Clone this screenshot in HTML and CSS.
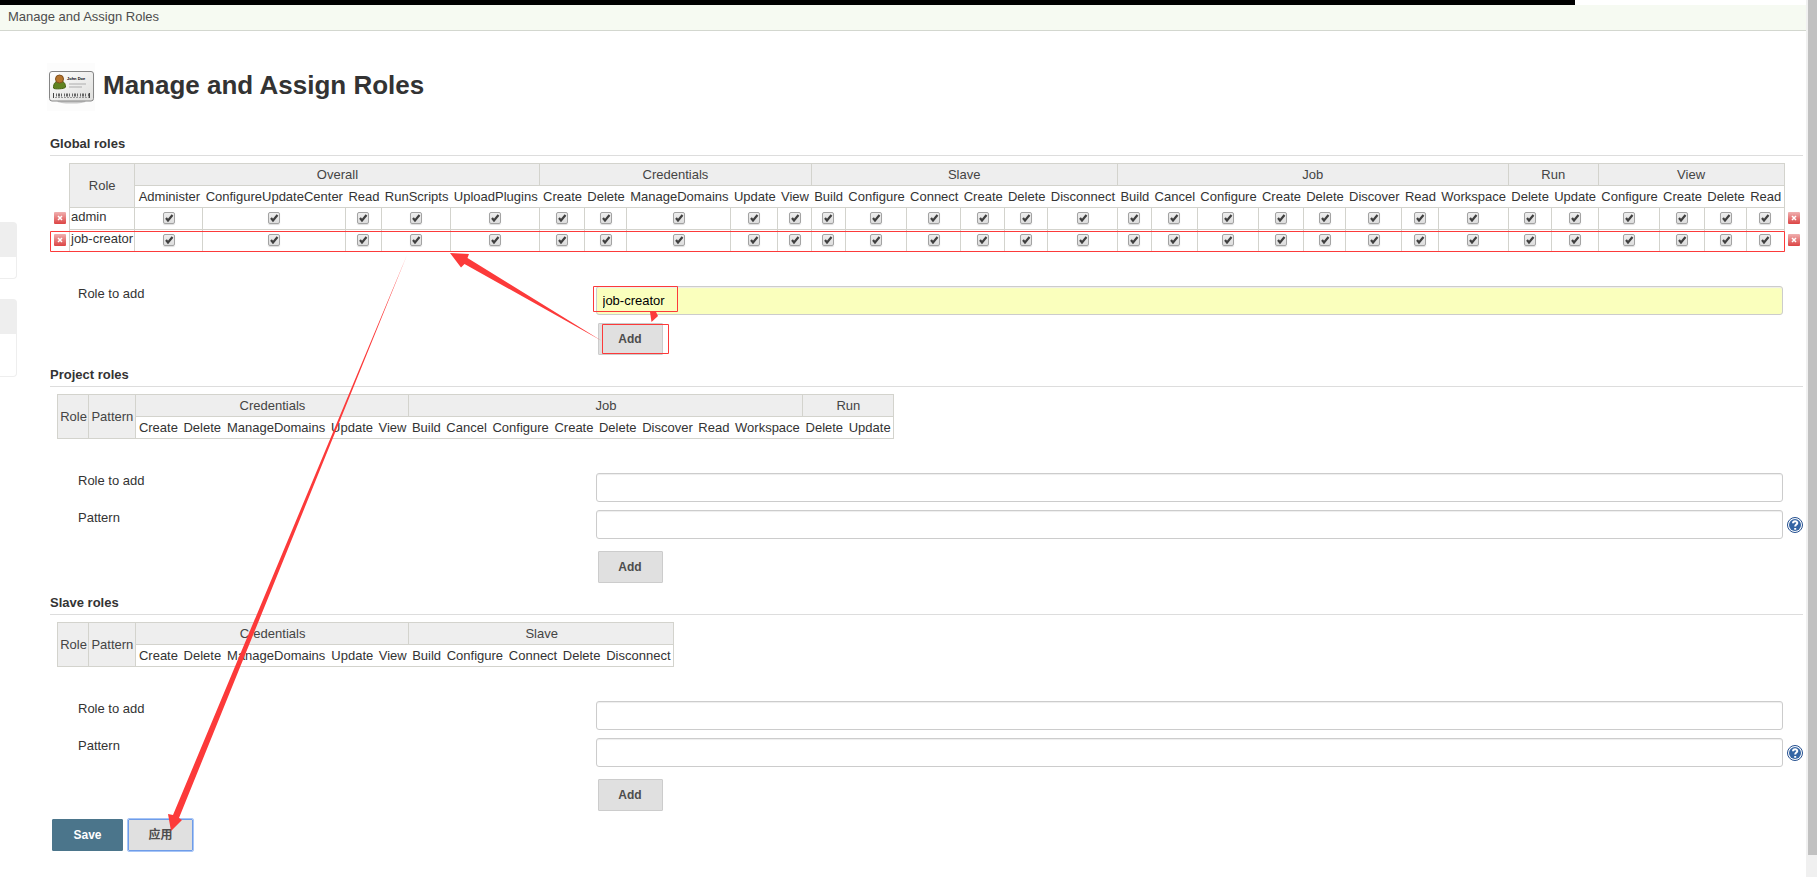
FILE: index.html
```html
<!DOCTYPE html>
<html lang="en">
<head>
<meta charset="utf-8">
<title>Manage and Assign Roles</title>
<link rel="stylesheet" href="styles.css">
</head>
<body>
<div class="viewport">
  <div class="topbar"><div class="topbar-fill"></div></div>
  <nav class="breadcrumb"><a href="#">Manage and Assign Roles</a></nav>
  <div class="columns">
    <aside class="side">
      <div class="pane"><div class="pane-head"></div><div class="pane-body"></div></div>
      <div class="pane pane-tall"><div class="pane-head"></div><div class="pane-body"></div></div>
    </aside>
    <main class="main">
      <header class="title">
        <svg class="badge" viewBox="0 0 48 48" aria-hidden="true">
          <defs><linearGradient id="card" x1="0" y1="0" x2="1" y2="1"><stop offset="0" stop-color="#fff"/><stop offset="1" stop-color="#dededc"/></linearGradient></defs>
          <rect width="48" height="48" fill="#fcfcfc"/>
          <ellipse cx="24.500" cy="38.500" rx="14" ry="2" fill="#c8c8c8"/>
          <rect x="2.500" y="8.500" width="44" height="29.500" rx="2.500" fill="url(#card)" stroke="#858585"/>
          <path d="M6.500 25c0-5 2-7 6-7s6 2 6 6c0 2-12 2.500-12 1z" fill="#5f8220" stroke="#44600f"/>
          <circle cx="12.500" cy="16" r="4" fill="#b5742c" stroke="#80501d"/>
          <text class="badge-name" x="20" y="17">John Doe</text>
          <path d="M22 21h17M22 24h13" stroke="#c2c2c2" stroke-width="1.500"/>
          <path d="M6.500 30v5M42.500 30v5" stroke="#444"/>
          <path d="M9 32h33" stroke="#666" stroke-width="3" stroke-dasharray="1 1 2 1 1 2"/>
          <path d="M8 34.500h34" stroke="#999" stroke-dasharray="2 1"/>
        </svg>
        <h1>Manage and Assign Roles</h1>
      </header>

      <section class="section">
        <h2>Global roles</h2>
        <div class="matrix-box"><table class="matrix matrix-wide" id="global"></table></div>
        <form class="entry">
          <label for="g-role">Role to add</label>
          <input class="filled" type="text" id="g-role" value="job-creator">
          <button type="button">Add</button>
        </form>
      </section>

      <section class="section">
        <h2>Project roles</h2>
        <div class="matrix-box matrix-inset"><table class="matrix matrix-project" id="project"></table></div>
        <form class="entry">
          <label for="p-role">Role to add</label>
          <input type="text" id="p-role">
          <label for="p-pattern">Pattern</label>
          <input type="text" id="p-pattern">
          <a class="help" href="#" aria-label="Help"><svg viewBox="0 0 16 16"><circle cx="8" cy="8" r="7.500" fill="#fff" stroke="#244f8f"/><circle cx="8" cy="8" r="6" fill="#3465a4"/><path d="M6 6.300C6 3.500 10.300 3.700 10.300 6 10.300 7.600 8.200 7.600 8.200 9.500M8.200 11v1.800" fill="none" stroke="#fff" stroke-width="2"/></svg></a>
          <button type="button" class="low">Add</button>
        </form>
      </section>

      <section class="section">
        <h2>Slave roles</h2>
        <div class="matrix-box matrix-inset"><table class="matrix matrix-slave" id="slave"></table></div>
        <form class="entry">
          <label for="s-role">Role to add</label>
          <input type="text" id="s-role">
          <label for="s-pattern">Pattern</label>
          <input type="text" id="s-pattern">
          <a class="help" href="#" aria-label="Help"><svg viewBox="0 0 16 16"><circle cx="8" cy="8" r="7.500" fill="#fff" stroke="#244f8f"/><circle cx="8" cy="8" r="6" fill="#3465a4"/><path d="M6 6.300C6 3.500 10.300 3.700 10.300 6 10.300 7.600 8.200 7.600 8.200 9.500M8.200 11v1.800" fill="none" stroke="#fff" stroke-width="2"/></svg></a>
          <button type="button" class="low">Add</button>
        </form>
      </section>

      <div class="actions">
        <button type="button" class="save">Save</button>
        <button type="button" class="apply" lang="zh">应用</button>
      </div>
    </main>
  </div>
</div>
<div class="scrollbar"><div class="thumb"></div></div>
<svg class="notes" viewBox="0 0 1817 877" aria-hidden="true">
  <g fill="none" stroke="#fc3a3a">
    <path d="M50.500 231.500H1784.500V251.500H50.500z"/>
    <path d="M593.500 286.500H677.500V311.500H593.500z"/>
    <path d="M602.500 324.500H668.500V353.500H602.500z"/>
  </g>
  <g fill="#fc3a3a">
    <path d="M650 312h6l2 4-6.500 6z"/>
    <path d="M450 253l19 1-1.500 4L602 341 464.500 264l-3.500 3.500z"/>
    <path d="M171 831l-3-17 5 1L407 255 179 818l3 2z"/>
  </g>
</svg>
<script src="matrix.js"></script>
</body>
</html>
```

FILE: styles.css
```css
* { box-sizing: border-box; }
body {
  margin: 0;
  display: flex;
  min-height: 100vh;
  position: relative;
  background: #fff;
  color: #333;
  font: 13px/16px "Liberation Sans", Arial, "Noto Sans CJK SC", sans-serif;
}
a { color: inherit; text-decoration: none; }
.viewport { flex: 1; min-width: 0; }
.topbar { height: 5px; }
.topbar-fill { height: 5px; width: 87.2%; background: #000; }
.breadcrumb {
  height: 26px;
  padding: 4px 8px;
  background: #f6faf2;
  border-bottom: 1px solid #d3d7cf;
  color: #4d4d4d;
}
.columns { display: flex; }
.side { width: 17px; padding-top: 191px; }
.pane {
  border: 1px solid #eee;
  border-left: 0;
  border-radius: 0 4px 4px 0;
  margin-bottom: 20px;
}
.pane-head { height: 34px; background: #eee; }
.pane-body { height: 21px; }
.pane-tall .pane-body { height: 42px; }
.main { flex: 1; min-width: 0; padding: 32px 3px 0 33px; }

.title { display: flex; height: 72px; margin-left: -3px; }
.badge { width: 48px; height: 48px; }
.badge-name { font-size: 4px; font-weight: bold; }
h1 { margin: 6px 0 0 8px; font-size: 26px; line-height: 32px; white-space: nowrap; }

.section { margin-bottom: 11px; }
h2 {
  margin: 0 0 7px;
  height: 21px;
  font-size: 13px;
  line-height: 18px;
  border-bottom: 1px solid #ddd;
}
.matrix { border-collapse: collapse; white-space: nowrap; }
.matrix-box { margin-bottom: 34px; }
.matrix-wide { width: 100%; }
.matrix-project { min-width: 837px; }
.matrix-slave { min-width: 617px; }
.matrix-inset { padding-left: 7px; }
.matrix th, .matrix td {
  height: 22px;
  padding: 0 3px;
  font-weight: normal;
  text-align: center;
  border: 1px solid #d3d3cd;
}
.matrix .group { background: #eee; color: #444; }
.matrix-inset .group { padding: 0 1px 0 2px; }
.matrix .perm { border-left: 0; border-right: 0; padding: 0 2px 0 3px; }
.matrix .perm:last-of-type { border-right: 1px solid #d3d3cd; }
.matrix .edge, .matrix .edge:last-of-type { border: 0; width: 19px; padding: 0 3px; }
.matrix .edge:first-child { padding-left: 4px; }
.matrix .name { text-align: left; vertical-align: top; padding: 1px 1px 0; }
.matrix input {
  display: block;
  appearance: none;
  width: 12px;
  height: 12px;
  margin: 0 auto 2px;
  border: 1px solid #a3a3a3;
  border-radius: 2px;
  background: url("data:image/svg+xml,%3Csvg xmlns='http://www.w3.org/2000/svg' viewBox='0 0 10 10'%3E%3Cpath d='M2 5l2 2.500L8.500 2' fill='none' stroke='%23404040' stroke-width='2.200'/%3E%3C/svg%3E") center / 10px 10px no-repeat, linear-gradient(#eee, #ddd);
  box-shadow: 0 1px 1px #ddd;
}
.remove { display: block; width: 12px; height: 12px; margin: 0 0 2px; padding: 0; border: 0; background: none; }
.remove svg { display: block; }

.entry {
  display: grid;
  grid-template-columns: 30% minmax(0, 1fr) 20px;
  padding-left: 28px;
  row-gap: 8px;
}
.entry label { grid-column: 1; }
.entry input {
  grid-column: 2;
  height: 29px;
  padding: 0 6px 1px;
  border: 1px solid #ccc;
  border-radius: 3px;
  box-shadow: inset 0 1px 1px #eee;
  font: 13px/16px "Liberation Sans", Arial, sans-serif;
  color: #000;
}
.entry .filled { background: #faffbd; }
.help { grid-column: 3; padding: 7px 0 0 4px; }
.help svg { display: block; width: 16px; height: 16px; }
.entry button, .actions button {
  grid-column: 2;
  justify-self: start;
  width: 65px;
  height: 32px;
  margin: 0 2px;
  padding: 0;
  border: 1px solid #ccc;
  border-radius: 1px;
  background: #e0e0e0;
  color: #4d4d4d;
  font: bold 12px/16px "Liberation Sans", Arial, "Noto Sans CJK SC", sans-serif;
}
.entry .low { margin-top: 4px; }
.actions { display: flex; gap: 1px; margin-top: -3px; }
.actions .save { width: 71px; background: #4b758b; border-color: #4b758b; color: #fff; }
.actions .apply { border-color: #6f9ce8; outline: 1px solid #a6c5f7; }

.scrollbar { width: 11px; padding-left: 2px; background: #f0f0f0; }
.thumb { height: 97.5%; background: #c1c1c1; }
.notes { position: absolute; left: 0; top: 0; width: 1817px; height: 877px; pointer-events: none; }
```

FILE: matrix.js
```js
const CREDENTIALS = ["Credentials", ["Create", "Delete", "ManageDomains", "Update", "View"]];
const JOB = ["Job", ["Build", "Cancel", "Configure", "Create", "Delete", "Discover", "Read", "Workspace"]];
const RUN = ["Run", ["Delete", "Update"]];

const removeCell = (role) =>
  `<td class="edge"><button type="button" class="remove" aria-label="Remove ${role}"><svg width="12" height="12" viewBox="0 0 12 12"><defs><linearGradient id="red" x1="0" y1="0" x2="0" y2="1"><stop offset="0" stop-color="#f0b0b0"/><stop offset="1" stop-color="#dc4444"/></linearGradient></defs><rect width="12" height="12" rx="1" fill="url(#red)"/><path d="M4 4l4 4M8 4l-4 4" stroke="#fff" stroke-width="1.500"/></svg></button></td>`;

function build(id, heads, groups, roles) {
  const edge = roles.length ? '<td class="edge"></td>' : "";
  const top = heads.map((h) => `<th class="group" rowspan="2">${h}</th>`).join("") +
    groups.map(([g, p]) => `<th class="group" colspan="${p.length}">${g}</th>`).join("");
  const perms = groups.flatMap(([g, p]) => p.map((n) => [g, n]));
  const second = perms.map(([, n]) => `<th class="perm">${n}</th>`).join("");
  const rows = roles.map((r) =>
    `<tr>${removeCell(r)}<td class="name">${r}</td>` +
    perms.map(([g, n]) => `<td><input type="checkbox" checked aria-label="${r}: ${g} ${n}"></td>`).join("") +
    `${removeCell(r)}</tr>`).join("");
  document.getElementById(id).innerHTML =
    `<thead><tr>${edge}${top}${edge}</tr><tr>${edge}${second}${edge}</tr></thead><tbody>${rows}</tbody>`;
}

build("global", ["Role"], [
  ["Overall", ["Administer", "ConfigureUpdateCenter", "Read", "RunScripts", "UploadPlugins"]],
  CREDENTIALS,
  ["Slave", ["Build", "Configure", "Connect", "Create", "Delete", "Disconnect"]],
  JOB, RUN,
  ["View", ["Configure", "Create", "Delete", "Read"]],
], ["admin", "job-creator"]);
build("project", ["Role", "Pattern"], [CREDENTIALS, JOB, RUN], []);
build("slave", ["Role", "Pattern"], [
  CREDENTIALS,
  ["Slave", ["Build", "Configure", "Connect", "Delete", "Disconnect"]],
], []);
```
